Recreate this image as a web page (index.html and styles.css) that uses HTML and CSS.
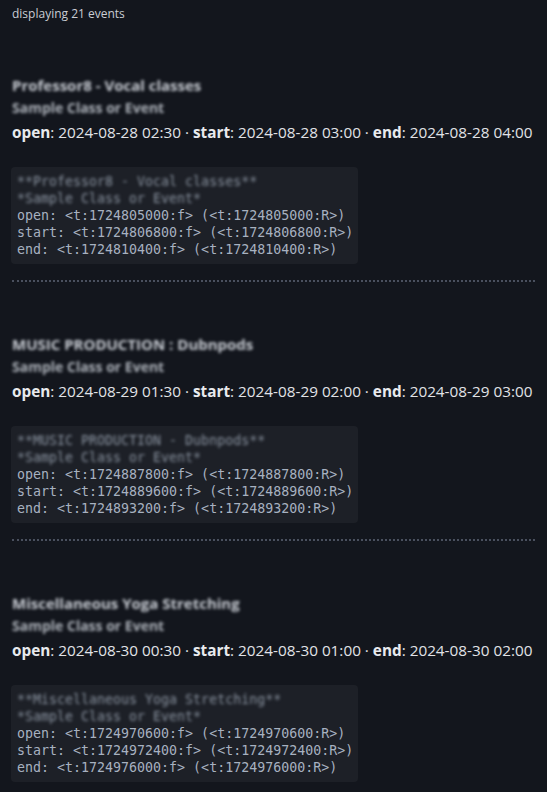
FILE: index.html
```html
<!DOCTYPE html>
<html>
<head>
<meta charset="utf-8">
<link rel="stylesheet" href="styles.css">
</head>
<body>
<div class="count">displaying 21 events</div>

<section class="event">
  <div class="title blur">Professor8 - Vocal classes</div>
  <div class="subtitle blur">Sample Class or Event</div>
  <div class="dates"><b>open</b>: 2024-08-28 02:30 · <b>start</b>: 2024-08-28 03:00 · <b>end</b>: 2024-08-28 04:00</div>
  <pre class="code"><span class="blur">**Professor8 - Vocal classes**</span>
<span class="blur">*Sample Class or Event*</span>
open: &lt;t:1724805000:f&gt; (&lt;t:1724805000:R&gt;)
start: &lt;t:1724806800:f&gt; (&lt;t:1724806800:R&gt;)
end: &lt;t:1724810400:f&gt; (&lt;t:1724810400:R&gt;)</pre>
</section>

<section class="event">
  <div class="title blur">MUSIC PRODUCTION : Dubnpods</div>
  <div class="subtitle blur">Sample Class or Event</div>
  <div class="dates"><b>open</b>: 2024-08-29 01:30 · <b>start</b>: 2024-08-29 02:00 · <b>end</b>: 2024-08-29 03:00</div>
  <pre class="code"><span class="blur">**MUSIC PRODUCTION - Dubnpods**</span>
<span class="blur">*Sample Class or Event*</span>
open: &lt;t:1724887800:f&gt; (&lt;t:1724887800:R&gt;)
start: &lt;t:1724889600:f&gt; (&lt;t:1724889600:R&gt;)
end: &lt;t:1724893200:f&gt; (&lt;t:1724893200:R&gt;)</pre>
</section>

<section class="event">
  <div class="title blur">Miscellaneous Yoga Stretching</div>
  <div class="subtitle blur">Sample Class or Event</div>
  <div class="dates"><b>open</b>: 2024-08-30 00:30 · <b>start</b>: 2024-08-30 01:00 · <b>end</b>: 2024-08-30 02:00</div>
  <pre class="code"><span class="blur">**Miscellaneous Yoga Stretching**</span>
<span class="blur">*Sample Class or Event*</span>
open: &lt;t:1724970600:f&gt; (&lt;t:1724970600:R&gt;)
start: &lt;t:1724972400:f&gt; (&lt;t:1724972400:R&gt;)
end: &lt;t:1724976000:f&gt; (&lt;t:1724976000:R&gt;)</pre>
</section>
</body>
</html>
```

FILE: styles.css
```css
html, body {
  background: #13161d;
}
body {
  margin: 0;
  padding: 6px 12px 0 12px;
  font-family: "Open Sans", "Noto Sans", sans-serif;
  color: #dcdfe4;
  overflow: hidden;
}
.count {
  font-size: 12px;
  line-height: 16px;
  color: #c9cdd4;
}
.event {
  padding-top: 52px;
  padding-bottom: 16px;
  border-bottom: 2px dotted #4a505e;
}
.event + .event {
  padding-top: 51px;
}
.blur {
  filter: blur(1.4px);
}
.title {
  font-size: 15px;
  font-weight: 700;
  line-height: 22px;
  color: #c8ccd3;
}
.subtitle {
  font-size: 14px;
  font-weight: 700;
  line-height: 24px;
  color: #aeb3bb;
}
.dates {
  font-size: 15.3px;
  line-height: 24px;
  color: #e1e3e7;
}
.dates b {
  font-weight: 700;
  color: #e8eaee;
}
.code {
  margin: 23px 0 0 -1px;
  width: 347px;
  box-sizing: border-box;
  padding: 6px 6px;
  background: #1d2027;
  border-radius: 4px;
  font-family: "DejaVu Sans Mono", monospace;
  font-size: 13.3px;
  line-height: 17px;
  color: #a7b1c0;
}
.code .blur {
  color: #8a93a0;
  display: inline-block;
}
```
